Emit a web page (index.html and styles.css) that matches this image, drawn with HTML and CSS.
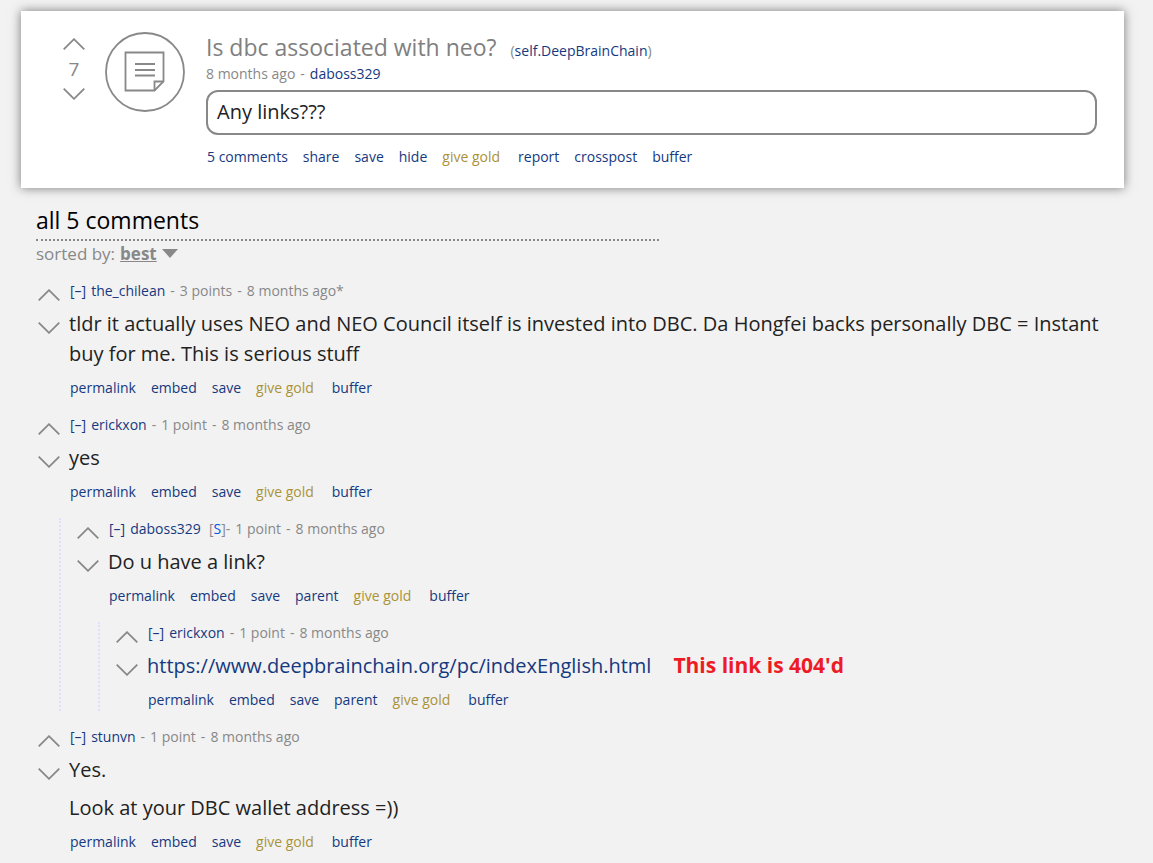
FILE: index.html
```html
<!DOCTYPE html>
<html lang="en">
<head>
    <meta charset="UTF-8">
    <meta name="viewport" content="width=device-width, initial-scale=1.0">
    <title>Is dbc associated with neo? : DeepBrainChain</title>
    <link rel="stylesheet" href="styles.css">
</head>
<body>
    <!-- arrow shapes shared by every vote column -->
    <svg class="shapes" width="0" height="0" aria-hidden="true">
        <symbol id="arrow-up" viewBox="0 0 22 12"><path d="M.7 11.3 11 1.2l10.3 10.1"/></symbol>
        <symbol id="arrow-down" viewBox="0 0 22 12"><path d="M.7.7 11 10.8 21.3.7"/></symbol>
    </svg>

    <article class="post">
        <div class="vote post-vote">
            <button type="button" aria-label="upvote"><svg><use href="#arrow-up"/></svg></button>
            <span class="score">7</span>
            <button type="button" aria-label="downvote"><svg><use href="#arrow-down"/></svg></button>
        </div>
        <svg class="thumbnail" viewBox="0 0 80 80" aria-hidden="true">
            <circle cx="40" cy="40" r="39"/>
            <path d="M20.500 20.500h38v29l-9 9h-29z"/>
            <path d="M58.500 49.500h-9v9"/>
            <path d="M30 32h20M30 38h20M30 43.500h20"/>
        </svg>
        <div class="entry">
            <h1 class="title">Is dbc associated with neo? <span class="domain">(<a href="#">self.DeepBrainChain</a>)</span></h1>
            <p class="tagline"><span>8 months ago</span><span>-</span><a href="#">daboss329</a></p>
            <div class="selftext">Any links???</div>
            <ul class="buttons">
                <li><a href="#">5 comments</a></li>
                <li><a href="#">share</a></li>
                <li><a href="#">save</a></li>
                <li><a href="#">hide</a></li>
                <li><a class="gold" href="#">give gold</a></li>
                <li><a href="#">report</a></li>
                <li><a href="#">crosspost</a></li>
                <li><a href="#">buffer</a></li>
            </ul>
        </div>
    </article>

    <section class="comments">
        <h2 class="comments-title">all 5 comments</h2>
        <div class="sort">
            <label for="sort">sorted by:</label>
            <select id="sort">
                <option>best</option>
            </select>
            <svg class="caret" viewBox="0 0 16 10" aria-hidden="true"><path d="M0 0h16L8 9z"/></svg>
        </div>

        <div class="comment">
            <div class="row">
                <div class="vote">
                    <button type="button" aria-label="upvote"><svg><use href="#arrow-up"/></svg></button>
                    <button type="button" aria-label="downvote"><svg><use href="#arrow-down"/></svg></button>
                </div>
                <div class="body">
                    <p class="tagline"><a href="#">[–]</a><a href="#">the_chilean</a><span>-</span><span>3 points</span><span>-</span><span>8 months ago*</span></p>
                    <div class="text">
                        <p>tldr it actually uses NEO and NEO Council itself is invested into DBC. Da Hongfei backs personally DBC = Instant buy for me. This is serious stuff</p>
                    </div>
                    <ul class="buttons">
                        <li><a href="#">permalink</a></li>
                        <li><a href="#">embed</a></li>
                        <li><a href="#">save</a></li>
                        <li><a class="gold" href="#">give gold</a></li>
                        <li><a href="#">buffer</a></li>
                    </ul>
                </div>
            </div>
        </div>

        <div class="comment">
            <div class="row">
                <div class="vote">
                    <button type="button" aria-label="upvote"><svg><use href="#arrow-up"/></svg></button>
                    <button type="button" aria-label="downvote"><svg><use href="#arrow-down"/></svg></button>
                </div>
                <div class="body">
                    <p class="tagline"><a href="#">[–]</a><a href="#">erickxon</a><span>-</span><span>1 point</span><span>-</span><span>8 months ago</span></p>
                    <div class="text">
                        <p>yes</p>
                    </div>
                    <ul class="buttons">
                        <li><a href="#">permalink</a></li>
                        <li><a href="#">embed</a></li>
                        <li><a href="#">save</a></li>
                        <li><a class="gold" href="#">give gold</a></li>
                        <li><a href="#">buffer</a></li>
                    </ul>
                </div>
            </div>

            <div class="replies">
                <div class="comment">
                    <div class="row">
                        <div class="vote">
                            <button type="button" aria-label="upvote"><svg><use href="#arrow-up"/></svg></button>
                            <button type="button" aria-label="downvote"><svg><use href="#arrow-down"/></svg></button>
                        </div>
                        <div class="body">
                            <p class="tagline"><a href="#">[–]</a><a href="#">daboss329</a><span class="submitter">[<a href="#">S</a>]</span><span>-</span><span>1 point</span><span>-</span><span>8 months ago</span></p>
                            <div class="text">
                                <p>Do u have a link?</p>
                            </div>
                            <ul class="buttons">
                                <li><a href="#">permalink</a></li>
                                <li><a href="#">embed</a></li>
                                <li><a href="#">save</a></li>
                                <li><a href="#">parent</a></li>
                                <li><a class="gold" href="#">give gold</a></li>
                                <li><a href="#">buffer</a></li>
                            </ul>
                        </div>
                    </div>

                    <div class="replies">
                        <div class="comment">
                            <div class="row">
                                <div class="vote">
                                    <button type="button" aria-label="upvote"><svg><use href="#arrow-up"/></svg></button>
                                    <button type="button" aria-label="downvote"><svg><use href="#arrow-down"/></svg></button>
                                </div>
                                <div class="body">
                                    <p class="tagline"><a href="#">[–]</a><a href="#">erickxon</a><span>-</span><span>1 point</span><span>-</span><span>8 months ago</span></p>
                                    <div class="text">
                                        <p><a href="#">https://www.deepbrainchain.org/pc/indexEnglish.html</a><strong class="note">This link is 404'd</strong></p>
                                    </div>
                                    <ul class="buttons">
                                        <li><a href="#">permalink</a></li>
                                        <li><a href="#">embed</a></li>
                                        <li><a href="#">save</a></li>
                                        <li><a href="#">parent</a></li>
                                        <li><a class="gold" href="#">give gold</a></li>
                                        <li><a href="#">buffer</a></li>
                                    </ul>
                                </div>
                            </div>
                        </div>
                    </div>
                </div>
            </div>
        </div>

        <div class="comment">
            <div class="row">
                <div class="vote">
                    <button type="button" aria-label="upvote"><svg><use href="#arrow-up"/></svg></button>
                    <button type="button" aria-label="downvote"><svg><use href="#arrow-down"/></svg></button>
                </div>
                <div class="body">
                    <p class="tagline"><a href="#">[–]</a><a href="#">stunvn</a><span>-</span><span>1 point</span><span>-</span><span>8 months ago</span></p>
                    <div class="text">
                        <p>Yes.</p>
                        <p>Look at your DBC wallet address =))</p>
                    </div>
                    <ul class="buttons">
                        <li><a href="#">permalink</a></li>
                        <li><a href="#">embed</a></li>
                        <li><a href="#">save</a></li>
                        <li><a class="gold" href="#">give gold</a></li>
                        <li><a href="#">buffer</a></li>
                    </ul>
                </div>
            </div>
        </div>
    </section>
</body>
</html>
```
FILE: styles.css
```css
* {
    margin: 0;
    padding: 0;
    box-sizing: border-box;
}

body {
    padding: 11px 29px 0 21px;
    background-color: #f2f2f2;
    color: #888;
    font-family: "Segoe UI", "Open Sans", sans-serif;
    font-size: 14px;
    line-height: 22px;
}

a {
    color: #15397f;
    text-decoration: none;
}

a:hover {
    text-decoration: underline;
}

ul {
    list-style: none;
}

.shapes {
    position: absolute;
}

/* post */

.post {
    display: flex;
    align-items: flex-start;
    padding: 21px 27px 20px 42px;
    background-color: #fff;
    box-shadow: 0 0 10px rgba(0, 0, 0, 0.5);
}

.thumbnail {
    flex: none;
    width: 80px;
    height: 80px;
    margin: 0 21px 0 20px;
    fill: none;
    stroke: #888;
    stroke-width: 1.8;
}

.entry {
    flex: 1;
}

.title {
    color: #808080;
    font-size: 23px;
    font-weight: normal;
    line-height: 31px;
}

.domain {
    margin-left: 8px;
    color: #888;
    font-size: 14px;
    line-height: 14px;
}

.tagline {
    display: flex;
    gap: 5px;
}

.selftext {
    margin: 5px 0 11px;
    padding: 5px 9px 6px;
    border: 2px solid #888;
    border-radius: 12px;
    color: #222;
    font-size: 20px;
    line-height: 30px;
}

.buttons {
    display: flex;
    gap: 15px;
    padding-left: 1px;
}

.gold {
    padding-right: 3px;
    color: #ab9239;
}

/* vote arrows */

.vote {
    display: flex;
    flex: none;
    flex-direction: column;
    align-items: center;
    gap: 21px;
    width: 22px;
    padding-top: 9px;
}

.vote button {
    display: block;
    height: 12px;
    border: none;
    background: none;
    cursor: pointer;
}

.vote svg {
    display: block;
    width: 22px;
    height: 12px;
    fill: none;
    stroke: #888;
    stroke-width: 1.8;
}

.post-vote {
    gap: 8px;
    padding-top: 6px;
}

.score {
    font-size: 19px;
}

/* comments */

.comments {
    padding: 17px 0 10px 17px;
}

.comments-title {
    max-width: 623px;
    margin-left: -2px;
    padding-bottom: 4px;
    border-bottom: 2px dotted #888;
    color: #000;
    font-size: 23px;
    font-weight: normal;
    line-height: 30px;
}

.sort {
    display: flex;
    align-items: center;
    margin: 2px 0 15px -2px;
    font-size: 17px;
}

.sort select {
    appearance: none;
    margin: 0 5px;
    border: none;
    background: none;
    color: #888;
    font: inherit;
    font-weight: bold;
    text-decoration: underline;
    cursor: pointer;
}

.caret {
    width: 16px;
    height: 10px;
    fill: #888;
}

.comment {
    margin-bottom: 15px;
}

.row {
    display: flex;
    gap: 9px;
}

.body {
    flex: 1;
}

.body .tagline {
    padding-left: 1px;
}

.submitter {
    margin: 0 -5px 0 3px;
}

.submitter a {
    color: #0055df;
}

.text {
    margin-top: 7px;
    color: #222;
    font-size: 20px;
    line-height: 30px;
}

.text p {
    margin-bottom: 8px;
}

.note {
    margin-left: 22px;
    color: #ed1c24;
    font-size: 21px;
    line-height: 21px;
}

.replies {
    margin: 15px 0 0 21px;
    padding-left: 16px;
    border-left: 2px dotted #dfdfff;
}

.replies .comment {
    margin-bottom: 0;
}
```
